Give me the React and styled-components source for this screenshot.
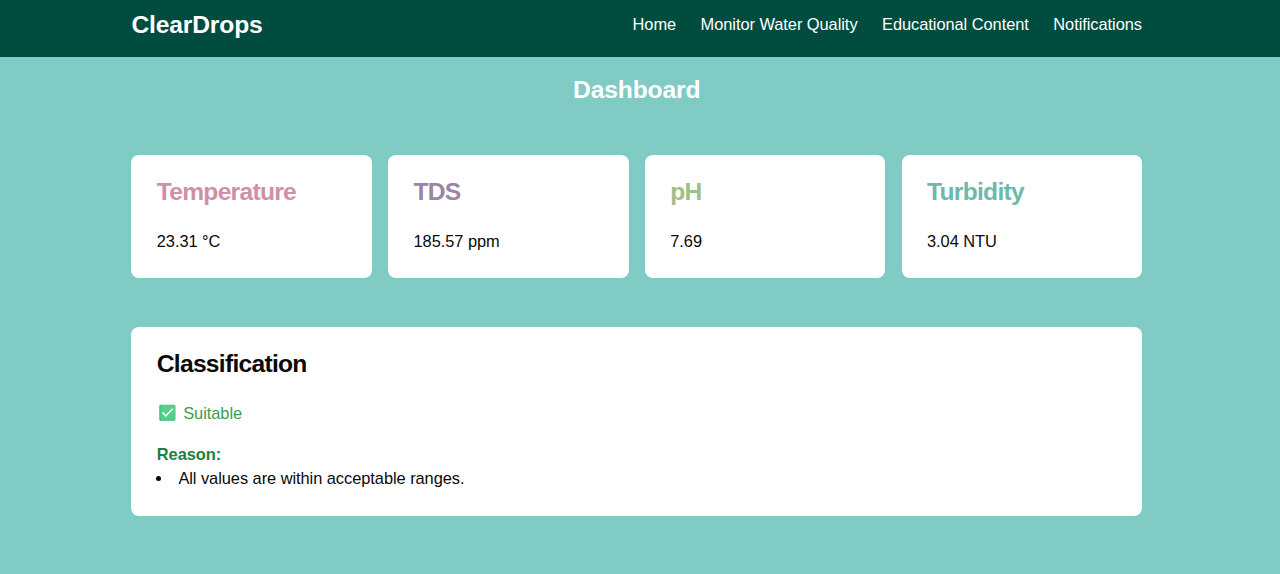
import React from 'react';
import styled, { createGlobalStyle } from 'styled-components';

const GlobalStyle = createGlobalStyle`
  *, *::before, *::after { box-sizing: border-box; }
  body {
    margin: 0;
    min-height: 100vh;
    overflow: hidden;
    background: #80cbc4;
    color: #0a0a0a;
    font: 16.4px/24.6px "Liberation Sans", Arial, sans-serif;
    letter-spacing: -0.045px;
  }
  h1, h2, p, ul { margin: 0; padding: 0; }
`;

const Header = styled.header`
  height: 57px;
  padding: 8px 138px 0 131.4px;
  display: flex;
  justify-content: space-between;
  align-items: flex-start;
  background: #004d40;
  color: #fff;
`;
const Brand = styled.h1`
  font-size: 24.6px;
  line-height: 33px;
  letter-spacing: -0.14px;
`;
const Nav = styled.nav`
  display: flex;
  gap: 24.5px;
  padding-top: 4px;
`;
const NavLink = styled.a`
  color: #fff;
  text-decoration: none;
`;
const Main = styled.main`
  padding: 16px 138px 0 131.4px;
`;
const PageTitle = styled.h2`
  color: #fff;
  font-size: 24.6px;
  line-height: 33px;
  letter-spacing: -0.14px;
  text-align: center;
`;
const Cards = styled.section`
  display: grid;
  grid-template-columns: repeat(4, 1fr);
  gap: 16.4px;
  margin-top: 49px;
`;
const Card = styled.article`
  background: #fff;
  border-radius: 8px;
  padding: 20px 25.4px;
`;
const MetricCard = styled(Card)`
  height: 123px;
`;
const CardTitle = styled.h2`
  color: ${({ $color }) => $color || '#0a0a0a'};
  font-size: 24.6px;
  line-height: 33px;
  letter-spacing: -0.72px;
`;
const Value = styled.p`
  margin-top: 20.5px;
`;
const ResultCard = styled(Card)`
  height: 188.6px;
  margin-top: 49.2px;
`;
const Status = styled.p`
  display: flex;
  align-items: center;
  gap: 7px;
  margin-top: 20.5px;
  padding-left: 2.4px;
  color: #389e50;
`;
const Reason = styled.p`
  margin-top: 16.4px;
  color: #1c8040;
  font-weight: bold;
`;
const Reasons = styled.ul`
  list-style: disc inside;
  margin-left: -0.8px;
`;

const metrics = [
  ['Temperature', '23.31 °C', '#d08fa7'],
  ['TDS', '185.57 ppm', '#9985a5'],
  ['pH', '7.69', '#9dbf88'],
  ['Turbidity', '3.04 NTU', '#70b7ac'],
];
const links = ['Home', 'Monitor Water Quality', 'Educational Content', 'Notifications'];

function CheckIcon() {
  return (
    <svg width="17" height="17" viewBox="0 0 17 17" aria-hidden="true">
      <rect x="0.3" y="0.7" width="16" height="16" rx="1.2" fill="#36b575" />
      <rect x="1.4" y="0.9" width="14.9" height="14.8" rx="1" fill="#55d08c" />
      <path d="M3.5 8.5l3.3 3.4 6.9-7.1" fill="none" stroke="#fff" strokeWidth="1.6" />
    </svg>
  );
}

export default function App() {
  return (
    <>
      <GlobalStyle />
      <Header>
        <Brand>ClearDrops</Brand>
        <Nav>{links.map((text) => <NavLink key={text}>{text}</NavLink>)}</Nav>
      </Header>
      <Main>
        <PageTitle>Dashboard</PageTitle>
        <Cards>
          {metrics.map(([name, value, color]) => (
            <MetricCard key={name}>
              <CardTitle $color={color}>{name}</CardTitle>
              <Value>{value}</Value>
            </MetricCard>
          ))}
        </Cards>
        <ResultCard>
          <CardTitle>Classification</CardTitle>
          <Status><CheckIcon />Suitable</Status>
          <Reason>Reason:</Reason>
          <Reasons><li>All values are within acceptable ranges.</li></Reasons>
        </ResultCard>
      </Main>
    </>
  );
}
